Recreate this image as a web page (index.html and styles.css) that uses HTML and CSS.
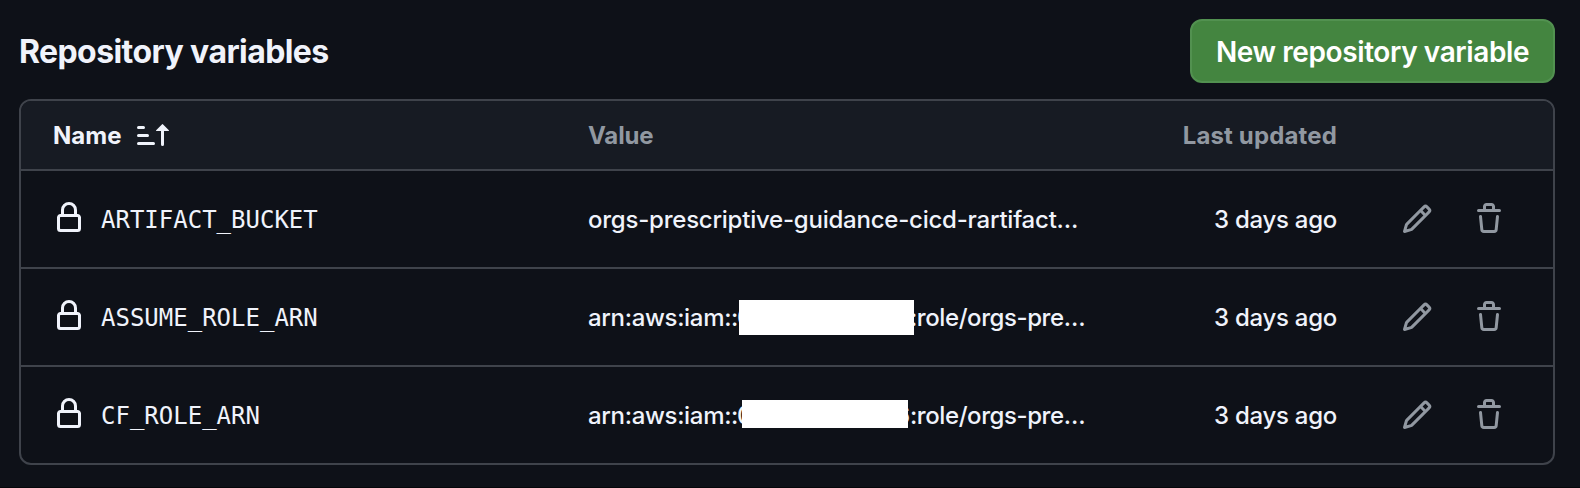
FILE: index.html
```
<!DOCTYPE html>
<html lang="en">
<head>
<meta charset="utf-8">
<title>Repository variables</title>
<link rel="stylesheet" href="styles.css">
</head>
<body>
<svg class="sprite" aria-hidden="true">
  <symbol id="lock" viewBox="0 0 16 16"><path d="M4 4a4 4 0 0 1 8 0v2h.25c.966 0 1.75.784 1.75 1.75v5.5A1.75 1.75 0 0 1 12.25 15h-8.5A1.75 1.75 0 0 1 2 13.25v-5.5C2 6.784 2.784 6 3.75 6H4Zm8.25 3.5h-8.5a.25.25 0 0 0-.25.25v5.5c0 .138.112.25.25.25h8.5a.25.25 0 0 0 .25-.25v-5.5a.25.25 0 0 0-.25-.25ZM10.5 6V4a2.5 2.5 0 1 0-5 0v2Z"/></symbol>
  <symbol id="pencil" viewBox="0 0 16 16"><path d="M11.013 1.427a1.75 1.75 0 0 1 2.474 0l1.086 1.086a1.75 1.75 0 0 1 0 2.474l-8.61 8.61c-.21.21-.47.364-.756.445l-3.251.93a.75.75 0 0 1-.927-.928l.929-3.25c.081-.286.235-.547.445-.758l8.61-8.61Zm.176 4.823L9.75 4.81l-6.286 6.287a.253.253 0 0 0-.064.108l-.558 1.953 1.953-.558a.253.253 0 0 0 .108-.064Zm1.238-3.763a.25.25 0 0 0-.354 0L10.811 3.75l1.439 1.44 1.263-1.263a.25.25 0 0 0 0-.354Z"/></symbol>
  <symbol id="trash" viewBox="0 0 16 16"><path d="M11 1.75V3h2.25a.75.75 0 0 1 0 1.5H2.75a.75.75 0 0 1 0-1.5H5V1.75C5 .784 5.784 0 6.75 0h2.5C10.216 0 11 .784 11 1.75ZM4.496 6.675l.66 6.6a.25.25 0 0 0 .249.225h5.19a.25.25 0 0 0 .249-.225l.66-6.6a.75.75 0 0 1 1.492.149l-.66 6.6A1.748 1.748 0 0 1 10.595 15h-5.19a1.75 1.75 0 0 1-1.741-1.575l-.66-6.6a.75.75 0 1 1 1.492-.15ZM6.5 1.75V3h3V1.75a.25.25 0 0 0-.25-.25h-2.5a.25.25 0 0 0-.25.25Z"/></symbol>
  <symbol id="sort" viewBox="0 0 16 16"><path d="m12.927 2.573 3 3A.25.25 0 0 1 15.75 6H13.5v6.75a.75.75 0 0 1-1.5 0V6H9.75a.25.25 0 0 1-.177-.427l3-3a.25.25 0 0 1 .354 0ZM0 12.25a.75.75 0 0 1 .75-.75h7.5a.75.75 0 0 1 0 1.5H.75a.75.75 0 0 1-.75-.75Zm0-4a.75.75 0 0 1 .75-.75h4.5a.75.75 0 0 1 0 1.5H.75A.75.75 0 0 1 0 8.25Zm0-4a.75.75 0 0 1 .75-.75h2.5a.75.75 0 0 1 0 1.5H.75A.75.75 0 0 1 0 4.25Z"/></symbol>
</svg>
<main class="page">
  <header class="heading">
    <h2 class="title">Repository variables</h2>
    <button class="new-button"><span class="new-label">New repository variable</span></button>
  </header>
  <section class="table">
    <div class="row head">
      <div class="cell-name"><span class="head-name">Name</span><svg class="icon sort"><use href="#sort"/></svg></div>
      <div class="head-value">Value</div>
      <div class="head-updated">Last updated</div>
    </div>
    <div class="row">
      <div class="cell-name"><svg class="icon lock"><use href="#lock"/></svg><span class="var">ARTIFACT_BUCKET</span></div>
      <div class="value bucket">orgs-prescriptive-guidance-cicd-rartifact…</div>
      <div class="updated">3 days ago</div>
      <div class="actions"><svg class="icon"><use href="#pencil"/></svg><svg class="icon"><use href="#trash"/></svg></div>
    </div>
    <div class="row">
      <div class="cell-name"><svg class="icon lock"><use href="#lock"/></svg><span class="var">ASSUME_ROLE_ARN</span></div>
      <div class="value arn"><span class="prefix">arn:aws:iam::</span><span class="account tall"><span>0</span><span>6</span></span><span class="suffix">:role/orgs-pre…</span></div>
      <div class="updated">3 days ago</div>
      <div class="actions"><svg class="icon"><use href="#pencil"/></svg><svg class="icon"><use href="#trash"/></svg></div>
    </div>
    <div class="row">
      <div class="cell-name"><svg class="icon lock"><use href="#lock"/></svg><span class="var">CF_ROLE_ARN</span></div>
      <div class="value arn"><span class="prefix">arn:aws:iam::</span><span class="account short"><span>0</span><span>6</span></span><span class="suffix">:role/orgs-pre…</span></div>
      <div class="updated">3 days ago</div>
      <div class="actions"><svg class="icon"><use href="#pencil"/></svg><svg class="icon"><use href="#trash"/></svg></div>
    </div>
  </section>
</main>
</body>
</html>
```
FILE: styles.css
```
* { box-sizing: border-box; }
body {
  margin: 0;
  background: #0e1118;
  color: #f0f3fb;
  font-family: Inter, "Liberation Sans", sans-serif;
  font-size: 24px;
  line-height: 36px;
}
.sprite { display: none; }
.page {
  height: 488px;
  padding: 19px 25px 0 19px;
  border-bottom: 1px solid #05070a;
}
.heading {
  display: flex;
  justify-content: space-between;
  align-items: center;
  height: 64px;
  margin-bottom: 16px;
}
.title {
  margin: 0;
  padding-top: 2px;
  font-size: 32px;
  font-weight: 650;
  line-height: 48px;
  letter-spacing: -0.58px;
  white-space: nowrap;
}
.new-button {
  display: flex;
  align-items: center;
  justify-content: center;
  width: 365px;
  height: 64px;
  padding: 2px 0 0;
  border: 2px solid #529150;
  border-radius: 12px;
  background: #448540;
  color: #fff;
  font: 600 28px/40px Inter, "Liberation Sans", sans-serif;
  letter-spacing: -0.4px;
  white-space: nowrap;
}
.table {
  border: 2px solid #3f434b;
  border-radius: 12px;
  overflow: hidden;
}
.row {
  display: grid;
  grid-template-columns: 535px 504px 245px 1fr;
  align-items: center;
  height: 98px;
  padding-left: 32px;
  padding-right: 48px;
  border-top: 2px solid #3f434b;
  white-space: nowrap;
}
.head {
  height: 68px;
  border-top: 0;
  background: #171b23;
  font-weight: 650;
}
.cell-name { display: flex; align-items: center; }
.head-name { width: 84px; padding-top: 2px; }
.head-value { padding-top: 2px; color: #9198a1; letter-spacing: -0.15px; }
.head-updated { padding-top: 2px; color: #9198a1; text-align: right; letter-spacing: 0.15px; }
.icon { display: block; width: 32px; height: 32px; fill: currentColor; }
.lock { margin: 0 16px 2px 0; }
.var { padding-top: 2px; font-family: "DejaVu Sans Mono", monospace; }
.value { display: flex; padding-top: 2px; font-weight: 450; }
.bucket { letter-spacing: -0.23px; }
.prefix { width: 149px; letter-spacing: -0.32px; }
.suffix { letter-spacing: -0.42px; }
.updated { padding-top: 2px; text-align: right; font-weight: 450; letter-spacing: -0.27px; }
.actions {
  display: flex;
  justify-content: flex-end;
  gap: 40px;
  color: #9198a1;
}
.account {
  position: relative;
  display: flex;
  justify-content: space-between;
  width: 173px;
}
.account::after {
  content: "";
  position: absolute;
  background: #fff;
}
.tall::after { left: 2px; top: 0; width: 175px; height: 35px; }
.short::after { left: 5px; top: 2px; width: 166px; height: 28px; }
```
